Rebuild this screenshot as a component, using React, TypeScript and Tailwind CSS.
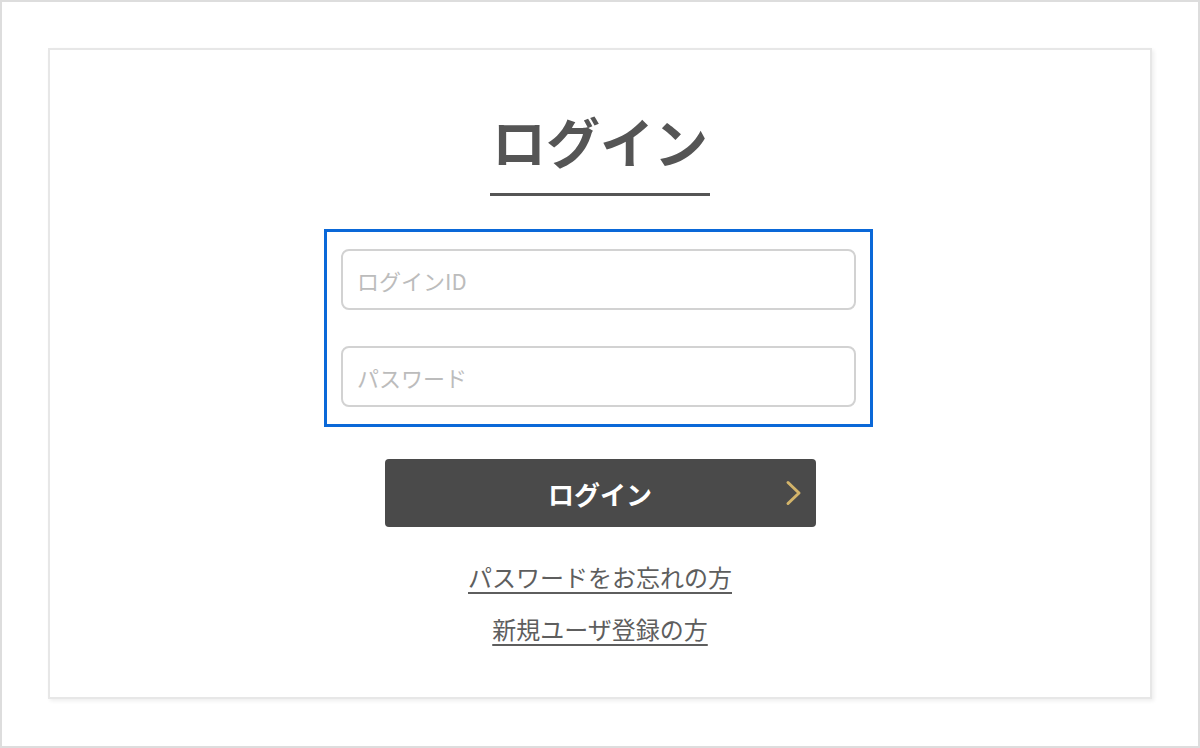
import React from "react";

const FONT = '"Noto Sans CJK JP", "Noto Sans", sans-serif';

export default function App() {
  const [loginId, setLoginId] = React.useState<string>("");
  const [password, setPassword] = React.useState<string>("");

  return (
    <div
      className="h-[748px] w-[1200px] border-2 border-[#dddddd] bg-white p-[46px]"
      style={{ fontFamily: FONT }}
    >
      <div className="flex h-[651px] w-full flex-col items-center border-2 border-[#e7e7e7] bg-white shadow-[2px_2px_4px_rgba(0,0,0,0.07)]">
        {/* title */}
        <h1 className="mt-[64px] border-b-[3px] border-[#555555] px-[2px] pb-[25px] text-[54px] font-bold leading-none text-[#555555]">
          ログイン
        </h1>

        {/* inputs */}
        <div className="mr-[3px] mt-[33px] flex w-[549px] flex-col gap-[36px] border-[3px] border-[#0a68d8] px-[14px] py-[17px]">
          <input
            type="text"
            value={loginId}
            onChange={e => setLoginId(e.target.value)}
            placeholder="ログインID"
            className="h-[61px] w-full rounded-[8px] border-2 border-[#d2d2d2] bg-white px-[14px] text-[22px] text-[#555555] outline-none placeholder:text-[#bcbcbc]"
          />
          <input
            type="password"
            value={password}
            onChange={e => setPassword(e.target.value)}
            placeholder="パスワード"
            className="h-[61px] w-full rounded-[8px] border-2 border-[#d2d2d2] bg-white px-[14px] text-[22px] text-[#555555] outline-none placeholder:text-[#bcbcbc]"
          />
        </div>

        {/* submit */}
        <button
          type="button"
          className="relative mt-[32px] flex h-[68px] w-[431px] items-center justify-center rounded-[4px] bg-[#4a4a4a] text-[26px] font-bold text-white"
        >
          ログイン
          <svg
            className="absolute right-[13px] top-1/2 -translate-y-1/2"
            width="18"
            height="26"
            viewBox="0 0 18 26"
            fill="none"
          >
            <path d="M3 2.5 L14 13 L3 23.5" stroke="#d3b46a" strokeWidth="3" strokeLinecap="round" strokeLinejoin="round" />
          </svg>
        </button>

        {/* links */}
        <div className="mt-[35px] flex flex-col items-center gap-[22px] text-[24px] leading-[30px] text-[#5e5e5e]">
          <a href="#" className="underline underline-offset-[5px]">パスワードをお忘れの方</a>
          <a href="#" className="underline underline-offset-[5px]">新規ユーザ登録の方</a>
        </div>
      </div>
    </div>
  );
}
